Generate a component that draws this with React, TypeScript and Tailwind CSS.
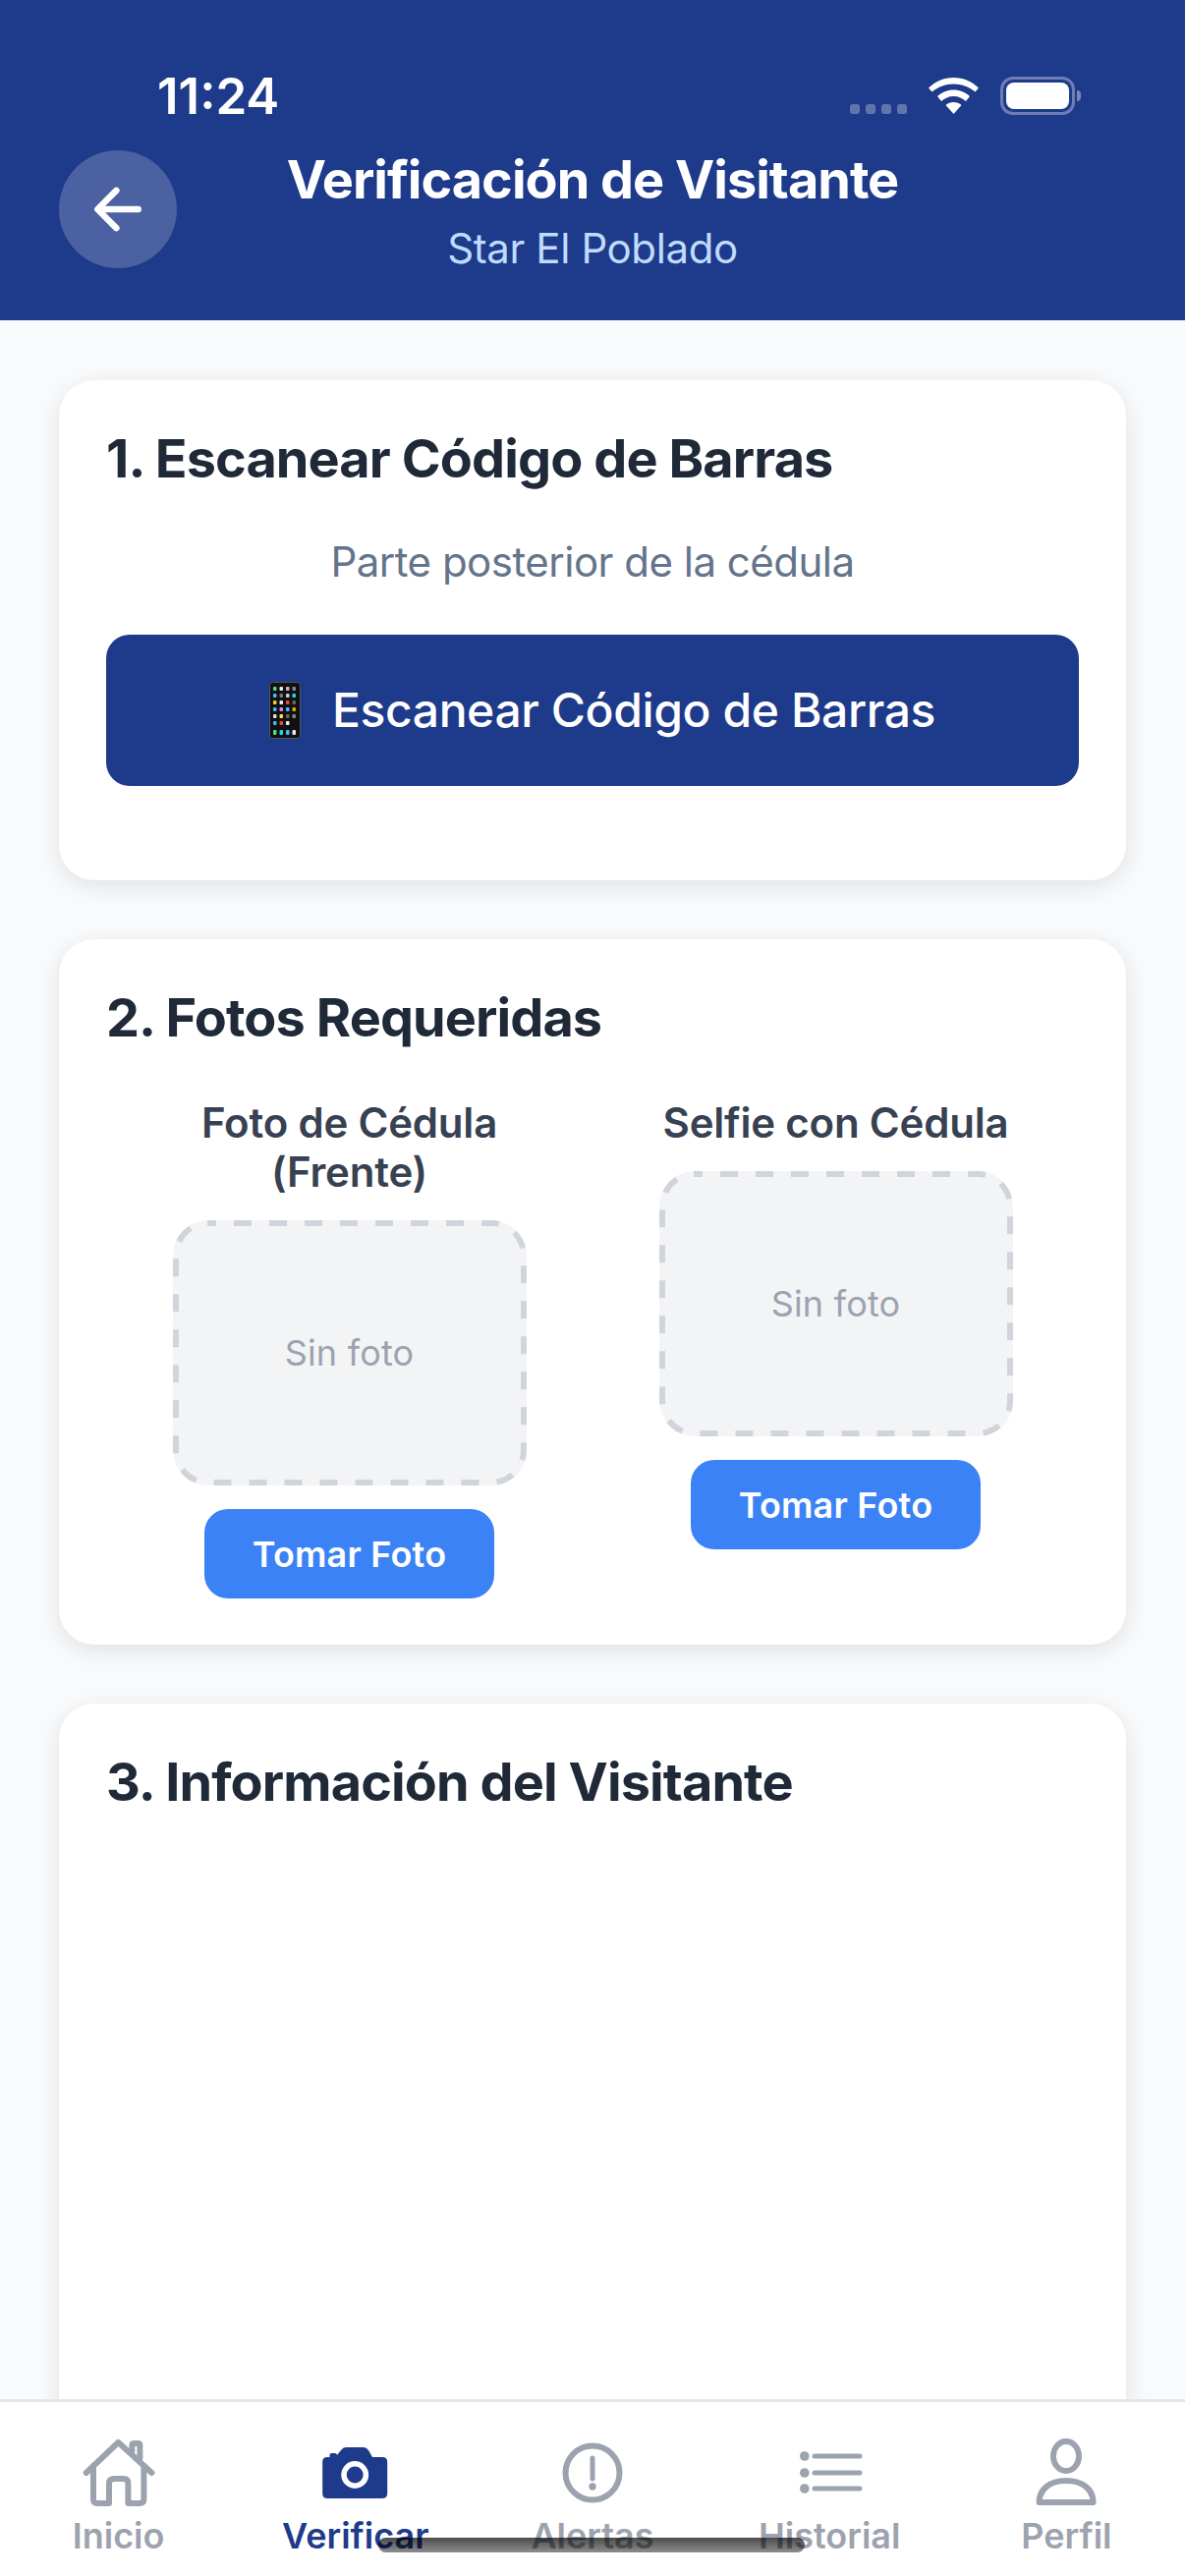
import { IoArrowBack } from "react-icons/io5"

function HomeIcon() {
  return (
    <svg viewBox="0 0 90 70" className="h-[70px] w-[90px]" fill="none" stroke="currentColor" strokeWidth="6" strokeLinecap="round" strokeLinejoin="round">
      <path d="M11.700 35L44.400 4L78.400 35" />
      <path d="M19 28V62Q19 66 23 66H35V46Q35 41 40 41H50Q54.400 41 54.400 46V66H66Q70.400 66 70.400 62V28" />
      <path d="M58.400 13V7Q58.400 5 60.400 5H64.400Q66.400 5 66.400 7V20" />
    </svg>
  )
}

function CameraIcon() {
  return (
    <svg viewBox="0 0 90 70" className="h-[70px] w-[90px]">
      <path
        fill="currentColor"
        d="M16 19H18.500V17Q18.500 15 20.500 15H24Q26 15 26 17L30 12Q32 9 35 9H53Q56 9 58 12L62 19H72Q77.200 19 77.200 24V56Q77.200 61 72 61H16Q11.200 61 11.200 56V24Q11.200 19 16 19Z"
      />
      <circle cx="44.200" cy="37" r="11.200" fill="none" stroke="white" strokeWidth="5.500" />
    </svg>
  )
}

function AlertIcon() {
  return (
    <svg viewBox="0 0 90 70" className="h-[70px] w-[90px]" fill="none" stroke="currentColor">
      <circle cx="45" cy="35" r="27.500" strokeWidth="6" />
      <path d="M45 20V41" strokeWidth="5" strokeLinecap="round" />
      <circle cx="45" cy="49" r="3.700" fill="currentColor" stroke="none" />
    </svg>
  )
}

function ListIcon() {
  return (
    <svg viewBox="0 0 90 70" className="h-[70px] w-[90px]" fill="currentColor">
      <circle cx="19.800" cy="18" r="4.800" />
      <circle cx="19.800" cy="35" r="4.800" />
      <circle cx="19.800" cy="51" r="4.800" />
      <path d="M30 18H76M30 35H76M30 51H76" stroke="currentColor" strokeWidth="5" strokeLinecap="round" />
    </svg>
  )
}

function PersonIcon() {
  return (
    <svg viewBox="0 0 90 70" className="h-[70px] w-[90px]" fill="none" stroke="currentColor" strokeWidth="6" strokeLinejoin="round">
      <ellipse cx="45" cy="18" rx="13" ry="15" />
      <path d="M17.600 65C17.600 52 28 43 45 43C62 43 72.600 52 72.600 65Z" />
    </svg>
  )
}

const tabs = [
  { label: "Inicio", Icon: HomeIcon },
  { label: "Verificar", Icon: CameraIcon, active: true },
  { label: "Alertas", Icon: AlertIcon },
  { label: "Historial", Icon: ListIcon },
  { label: "Perfil", Icon: PersonIcon },
]

function StatusBar() {
  return (
    <div className="flex h-[62px] items-center justify-between pr-[106px] pl-[160px]">
      <span className="text-[51px] leading-none font-semibold text-white">11:24</span>
      <div className="flex items-center">
        <div className="mt-[28px] mr-[22px] flex gap-[6px]">
          <span className="h-[10px] w-[10px] rounded-[3px] bg-white/30" />
          <span className="h-[10px] w-[10px] rounded-[3px] bg-white/30" />
          <span className="h-[10px] w-[10px] rounded-[3px] bg-white/30" />
          <span className="h-[10px] w-[10px] rounded-[3px] bg-white/30" />
        </div>
        <svg viewBox="0 0 51 37" className="mr-[22px] h-[37px] w-[51px]" fill="white">
          <path d="M25.500 0C15.500 0 7 4 0 10.500L3.500 14.500C9.500 9.500 17 6.500 25.500 6.500C34 6.500 41.500 9.500 47.500 14.500L51 10.500C44 4 35.500 0 25.500 0Z" />
          <path d="M25.500 12.500C19 12.500 13.500 15 9 19L13 24C16.500 21 20.500 19 25.500 19C30.500 19 34.500 21 38 24L42 19C37.500 15 32 12.500 25.500 12.500Z" />
          <path d="M25.500 25C22.500 25 19.500 26.200 17.500 28L25.500 37L33.500 28C31.500 26.200 28.500 25 25.500 25Z" />
        </svg>
        <div className="flex items-center">
          <div className="flex h-[39px] w-[76px] items-center justify-center rounded-[13px] border-[3px] border-white/35">
            <div className="h-[27px] w-[64px] rounded-[8px] bg-white" />
          </div>
          <div className="ml-[2px] h-[11px] w-[4px] rounded-r-full bg-white/40" />
        </div>
      </div>
    </div>
  )
}

function Header() {
  return (
    <header className="h-[326px] shrink-0 bg-[#1e3a8a] pt-[66px]">
      <StatusBar />
      <div className="mt-[25px] flex items-start px-[60px]">
        <button className="flex h-[120px] w-[120px] items-center justify-center rounded-full bg-white/20 text-white">
          <IoArrowBack size={68} />
        </button>
        <div className="flex-1 pr-[120px] text-center">
          <h1 className="text-[54px] leading-[60px] font-bold tracking-[-1px] text-white">Verificación de Visitante</h1>
          <p className="mt-[13px] text-[42px] leading-[54px] tracking-[-0.4px] text-[#bfdbfe]">Star El Poblado</p>
        </div>
      </div>
    </header>
  )
}

function Card({ title, className, children }: { title: string; className: string; children?: React.ReactNode }) {
  return (
    <section className={`rounded-[36px] bg-white p-[48px] shadow-[0_6px_24px_rgba(0,0,0,0.1)] ${className}`}>
      <h2 className="text-[54px] leading-[63px] font-bold tracking-[-0.9px] text-[#1f2937]">{title}</h2>
      {children}
    </section>
  )
}

function PhoneEmoji() {
  const colors = ["#4ade80", "#e5e7eb", "#d8a0e8", "#888888", "#38bdf8", "#777777", "#cccccc", "#22d3ee", "#facc15", "#eeeeee", "#ef4444", "#666666", "#38bdf8", "#e879f9", "#38bdf8", "#f59e0b", "#dddddd", "#fde047", "#666666", "#888888", "#38bdf8", "#ef4444", "#eeeeee", "#111111"]
  return (
    <svg viewBox="0 0 32 58" className="h-[58px] w-[32px]">
      <rect x="0.500" y="0.500" width="31" height="57" rx="3" fill="#111111" stroke="#555555" />
      {colors.map((c, i) => (
        <rect key={i} x={4 + (i % 4) * 6.500} y={5 + Math.floor(i / 4) * 7} width="3.500" height="4" rx="1" fill={c} />
      ))}
      {["#4ade80", "#22d3ee", "#38bdf8", "#e5e7eb"].map((c, i) => (
        <rect key={c} x={4 + i * 6.500} y="49" width="3.500" height="5" rx="1" fill={c} />
      ))}
    </svg>
  )
}

function PhotoSlot({ label }: { label: React.ReactNode }) {
  return (
    <div className="flex flex-1 flex-col items-center">
      <p className="text-center text-[42px] leading-[50px] font-semibold tracking-[-0.2px] text-[#374151]">{label}</p>
      <div className="relative mt-[24px] flex h-[270px] w-[360px] items-center justify-center rounded-[36px] bg-[#f3f4f6]">
        {/* border-dashed draws dashes too short here, so the outline is a drawing */}
        <svg viewBox="0 0 360 270" className="absolute inset-0 h-full w-full" fill="none">
          <rect x="3" y="3" width="354" height="264" rx="33" stroke="#d1d5db" strokeWidth="6" strokeDasharray="18 18" strokeDashoffset="10" />
        </svg>
        <span className="text-[36px] tracking-[0.2px] text-[#9ca3af]">Sin foto</span>
      </div>
      <button className="mt-[24px] h-[91px] w-[295px] rounded-[24px] bg-[#3b82f6] text-[36px] font-semibold tracking-[0.2px] text-white">
        Tomar Foto
      </button>
    </div>
  )
}

function TabBar() {
  return (
    <nav className="relative grid h-[180px] shrink-0 grid-cols-5 border-t-[3px] border-[#e5e7eb] bg-white pt-[37px]">
      {tabs.map(({ label, Icon, active }) => (
        <div key={label} className={`flex flex-col items-center ${active ? "text-[#1e3a8a]" : "text-[#9ca3af]"}`}>
          <Icon />
          <span className="mt-[7px] text-[36px] leading-[44px] font-semibold">{label}</span>
        </div>
      ))}
      <div className="absolute top-[138px] left-[385px] h-[15px] w-[434px] rounded-full bg-gradient-to-b from-black/70 to-black/45" />
    </nav>
  )
}

export default function App() {
  return (
    <div className="flex h-[2622px] w-[1206px] flex-col overflow-hidden bg-[#f9fafb] font-['Inter',sans-serif]">
      <Header />
      <main className="min-h-0 flex-1 overflow-hidden px-[60px] pt-[61px]">
        <Card title="1. Escanear Código de Barras" className="h-[509px]">
          <p className="mt-[47px] text-center text-[42px] leading-[54px] tracking-[-0.5px] text-[#64748b]">Parte posterior de la cédula</p>
          <button className="mt-[47px] flex h-[154px] w-full items-center justify-center gap-[32px] rounded-[24px] bg-[#1e3a8a] pl-[20px] text-[48px] font-medium tracking-[-0.4px] text-white">
            <PhoneEmoji />
            Escanear Código de Barras
          </button>
        </Card>
        <Card title="2. Fotos Requeridas" className="mt-[60px] h-[718px]">
          <div className="mt-[51px] flex items-start">
            <PhotoSlot label={<>Foto de Cédula<br />(Frente)</>} />
            <PhotoSlot label="Selfie con Cédula" />
          </div>
        </Card>
        <Card title="3. Información del Visitante" className="mt-[60px] h-[900px]" />
      </main>
      <TabBar />
    </div>
  )
}
